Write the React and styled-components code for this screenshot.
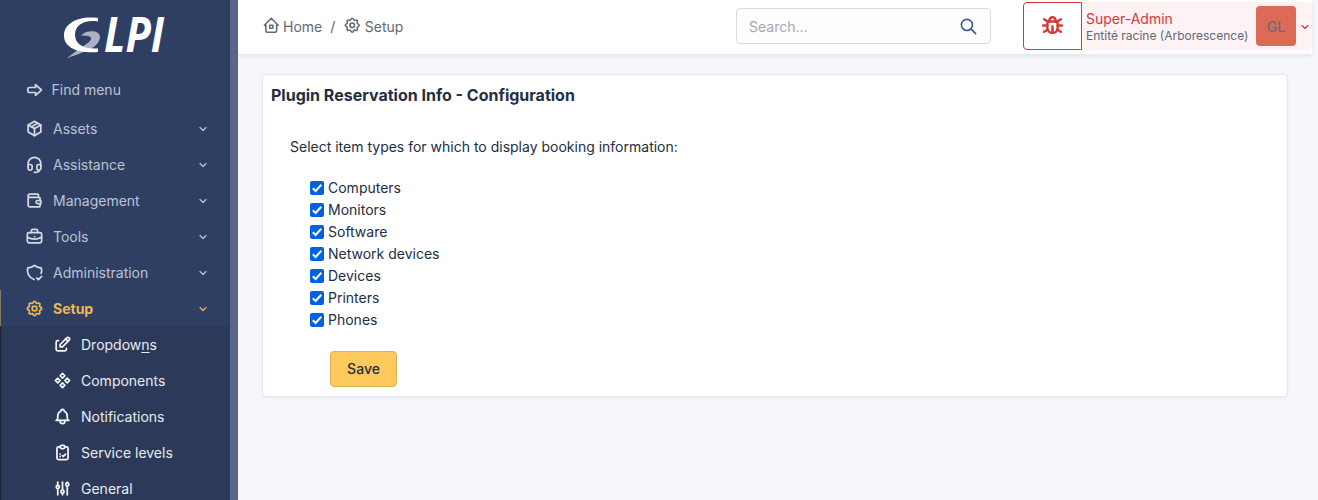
import React from 'react';
import styled, { createGlobalStyle, css } from 'styled-components';
import {
  TbPackage, TbHeadset, TbWallet, TbBriefcase, TbShieldCheck, TbSettings, TbEdit, TbComponents,
  TbBell, TbCheckupList, TbAdjustments, TbChevronDown, TbHome2, TbSearch, TbBug,
} from 'react-icons/tb';

const Global = createGlobalStyle`
  * { box-sizing: border-box; }
  body {
    margin: 0;
    background: #f5f7fb;
    color: #232e3f;
    font-family: Inter, "Liberation Sans", sans-serif;
    font-size: 14px;
    line-height: 20px;
    overflow: hidden;
  }
`;

const Page = styled.div`
  display: flex;
  height: 500px;
  overflow: hidden;
`;

const Sidebar = styled.aside`
  width: 238px;
  flex: none;
  background: #2f3f64;
  border-right: 8px solid #58668c;
  overflow: hidden;
`;

const Brand = styled.div`
  height: 72px;
  padding-left: 62px;
  svg { display: block; overflow: visible; }
`;

const navText = css`
  display: flex;
  align-items: center;
  height: 36px;
  font-size: 14px;
`;

const FindMenu = styled.div`
  ${navText}
  padding-left: 26px;
  gap: 7.5px;
  margin-bottom: 3px;
  color: #bcc3d1;
  svg { color: #d5d9e2; }
`;

const NavItem = styled.div`
  ${navText}
  padding: 0 21.5px 0 ${(p) => (p.$active ? 23.5 : 24.5)}px;
  color: #bcc3d1;
  ${(p) => p.$active && css`
    height: 37px;
    margin-top: -1px;
    padding-top: 1px;
    border-left: 1px solid #84786a;
    color: #ecb854;
    font-weight: 700;
  `}
`;

const NavIcon = styled.span`
  display: flex;
  width: 19px;
  margin-right: 9.5px;
  font-size: 19px;
  position: relative;
  top: -1px;
  color: ${(p) => (p.$active ? '#ecb854' : '#d5d9e2')};
  svg { stroke-width: 2.2; }
`;

const NavLabel = styled.span`
  flex: 1;
`;

const Submenu = styled.div`
  background: #2c3958;
  border-left: 1px solid #1b2337;
  height: 200px;
  margin-top: -1px;
  padding-top: 1px;
`;

const SubItem = styled.div`
  ${navText}
  padding-left: 51.5px;
  color: #e9ebf0;
`;

const SubIcon = styled(NavIcon)`
  color: #f3f5f9;
`;

const HotKey = styled.span`
  text-decoration: underline;
  text-underline-offset: 2px;
`;

const Main = styled.main`
  flex: 1;
  min-width: 0;
  padding-right: 6px;
`;

const Topbar = styled.header`
  height: 54px;
  background: #fff;
  display: flex;
  align-items: flex-start;
  box-shadow: 0 2px 4px rgba(35, 46, 63, 0.09);
`;

const Breadcrumb = styled.nav`
  display: flex;
  align-items: center;
  height: 54px;
  padding-left: 23.5px;
  width: 498px;
  font-size: 14px;
  color: #626976;
`;

const Crumb = styled.span`
  display: flex;
  align-items: center;
  gap: 3px;
  svg { font-size: 18.5px; stroke-width: 2; position: relative; top: -2px; }
`;

const Slash = styled.span`
  margin: 0 8px;
`;

const SearchBox = styled.div`
  display: flex;
  align-items: center;
  justify-content: space-between;
  width: 255px;
  height: 36px;
  margin-top: 8px;
  padding: 2px 12.5px 0 12px;
  border: 1px solid #d9dbe0;
  border-radius: 4px;
  background: #fdfdfd;
  color: #a5a9b1;
  font-size: 14px;
  svg { color: #3a5693; font-size: 19px; stroke-width: 2; position: relative; top: -1px; }
`;

const UserArea = styled.div`
  display: flex;
  align-items: center;
  width: 289px;
  height: 48px;
  margin: 2px 0 0 32px;
  background: #fdf3f4;
  border-radius: 4px;
`;

const DebugButton = styled.div`
  display: flex;
  align-items: center;
  justify-content: center;
  width: 59px;
  height: 48px;
  padding-bottom: 4px;
  background: #fff;
  border: 1px solid #d63939;
  border-radius: 4px 0 0 4px;
  color: #d63939;
  svg { stroke-width: 2.4; }
`;

const Profile = styled.div`
  width: 174px;
  padding: 2px 0 0 4px;
  white-space: nowrap;
`;

const ProfileName = styled.div`
  color: #d63939;
  font-size: 14px;
  line-height: 18px;
`;

const Entity = styled.div`
  color: #626976;
  font-size: 12px;
  line-height: 16px;
`;

const Avatar = styled.div`
  display: flex;
  align-items: center;
  justify-content: center;
  width: 40px;
  height: 40px;
  padding-top: 2px;
  background: #db6a57;
  border-radius: 4px;
  color: #6b6b77;
  font-size: 14px;
  font-weight: 500;
`;

const Chevron = styled.span`
  display: flex;
  svg { stroke-width: 2.4; }
`;

const Caret = styled(Chevron)`
  color: #d63939;
  margin: 1px 0 0 3px;
`;

const Card = styled.section`
  width: 1026px;
  height: 323px;
  margin: 20px 0 0 24px;
  padding: 9px 8px;
  background: #fff;
  border: 1px solid #e4e7ed;
  border-radius: 4px;
  box-shadow: 0 1px 3px rgba(35, 46, 63, 0.05);
`;

const Title = styled.h1`
  margin: 0;
  font-size: 16px;
  line-height: 22px;
  font-weight: 700;
`;

const Intro = styled.p`
  margin: 31px 0 0 19px;
  font-size: 14px;
  line-height: 20px;
`;

const Options = styled.div`
  margin: 20px 0 0 39px;
`;

const Option = styled.label`
  display: flex;
  align-items: center;
  gap: 4px;
  height: 22px;
`;

const Check = styled.span`
  display: flex;
  width: 14px;
  height: 14px;
  background: #0062e3;
  border-radius: 2px;
`;

const SaveButton = styled.button`
  display: block;
  width: 67px;
  height: 36px;
  margin: 20px 0 0 59px;
  padding: 0;
  background: #fec95c;
  border: 1px solid #dcb058;
  border-radius: 4px;
  color: #232e3f;
  font: 500 14px/20px Inter, "Liberation Sans", sans-serif;
`;

const nav = [
  ['Assets', TbPackage],
  ['Assistance', TbHeadset],
  ['Management', TbWallet],
  ['Tools', TbBriefcase],
  ['Administration', TbShieldCheck],
  ['Setup', TbSettings],
];

const subnav = [
  [<>Dropdow<HotKey>n</HotKey>s</>, TbEdit],
  ['Components', TbComponents],
  ['Notifications', TbBell],
  ['Service levels', TbCheckupList],
  ['General', TbAdjustments],
];

const types = ['Computers', 'Monitors', 'Software', 'Network devices', 'Devices', 'Printers', 'Phones'];

function Logo() {
  return (
    <svg width="112" height="72" viewBox="62 0 112 72">
      <path d="M67 58.500C74 52 84 46 89.500 41.500C93 38 91 35 81 35.500C86 29.500 100 29.500 100 37C100 44 91 50 82 52.500C77 55 72 56 67 58.500Z" fill="#abb2c3" />
      <path d="M98 18 C79 15.500 64 23 64 35.500 C64 47 76 53.500 98 52 L98 48.500 C84 49.500 75 44 75 35 C75 25 84 19.500 98 21.500Z" fill="#fff" />
      <text x="104" y="52" fill="#fff" fontFamily="Open Sans, sans-serif" fontStyle="italic" fontWeight="700" fontSize="47.5" textLength="60" lengthAdjust="spacingAndGlyphs">LPI</text>
    </svg>
  );
}

function FindIcon() {
  return (
    <svg width="18" height="16" viewBox="0 0 18 16" fill="none" stroke="currentColor" strokeWidth="1.7" strokeLinejoin="round">
      <path d="M9.500 5.500V2.700L15.500 8L9.500 13.300V10.500H3.500Q1.800 10.500 1.800 9V7Q1.800 5.500 3.500 5.500Z" />
    </svg>
  );
}

export default function App() {
  return (
    <>
      <Global />
      <Page>
        <Sidebar>
          <Brand><Logo /></Brand>
          <FindMenu><FindIcon />Find menu</FindMenu>
          {nav.map(([label, Icon]) => (
            <NavItem key={label} $active={label === 'Setup'}>
              <NavIcon $active={label === 'Setup'}><Icon /></NavIcon>
              <NavLabel>{label}</NavLabel>
              <Chevron><TbChevronDown size={12} /></Chevron>
            </NavItem>
          ))}
          <Submenu>
            {subnav.map(([label, Icon], i) => (
              <SubItem key={i}>
                <SubIcon><Icon /></SubIcon>
                <span>{label}</span>
              </SubItem>
            ))}
          </Submenu>
        </Sidebar>
        <Main>
          <Topbar>
            <Breadcrumb>
              <Crumb><TbHome2 />Home</Crumb>
              <Slash>/</Slash>
              <Crumb><TbSettings />Setup</Crumb>
            </Breadcrumb>
            <SearchBox>Search...<TbSearch /></SearchBox>
            <UserArea>
              <DebugButton><TbBug size={25} /></DebugButton>
              <Profile>
                <ProfileName>Super-Admin</ProfileName>
                <Entity>Entité racine (Arborescence)</Entity>
              </Profile>
              <Avatar>GL</Avatar>
              <Caret><TbChevronDown size={12} /></Caret>
            </UserArea>
          </Topbar>
          <Card>
            <Title>Plugin Reservation Info - Configuration</Title>
            <Intro>Select item types for which to display booking information:</Intro>
            <Options>
              {types.map((type) => (
                <Option key={type}>
                  <Check>
                    <svg width="14" height="14" viewBox="0 0 14 14" fill="none" stroke="#fff" strokeWidth="2">
                      <path d="M2.800 7.300L5.600 10L11.300 3.800" />
                    </svg>
                  </Check>
                  {type}
                </Option>
              ))}
            </Options>
            <SaveButton>Save</SaveButton>
          </Card>
        </Main>
      </Page>
    </>
  );
}
